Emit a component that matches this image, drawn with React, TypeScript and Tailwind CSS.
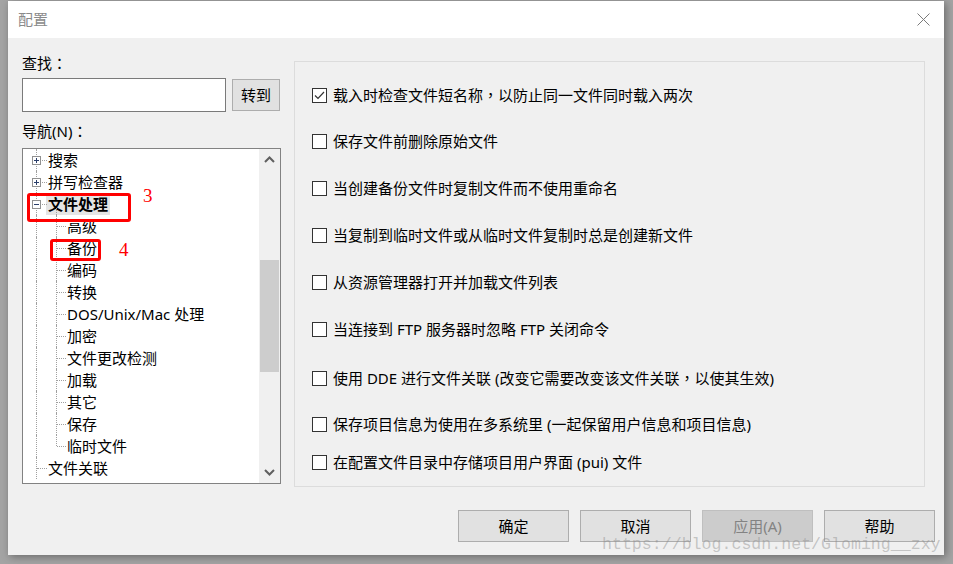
import React from "react";

const font = { fontFamily: '"Noto Sans", "Noto Sans CJK SC", sans-serif' };
const punctFont = { fontFamily: '"Noto Sans CJK TC", sans-serif' };

// full-width punctuation sits centred in the reference, as in the TC cut
function Txt({ s }: { s: string }) {
  const parts = s.split(/([，：])/);
  return (
    <>
      {parts.map((p, i) =>
        p === "，" || p === "：" ? (
          <span key={i} style={punctFont}>
            {p}
          </span>
        ) : (
          <React.Fragment key={i}>{p}</React.Fragment>
        )
      )}
    </>
  );
}

type TreeItem = { label: string; level: 1 | 2; box?: "plus" | "minus"; selected?: boolean; last?: boolean };

const tree: TreeItem[] = [
  { label: "搜索", level: 1, box: "plus" },
  { label: "拼写检查器", level: 1, box: "plus" },
  { label: "文件处理", level: 1, box: "minus", selected: true },
  { label: "高级", level: 2 },
  { label: "备份", level: 2 },
  { label: "编码", level: 2 },
  { label: "转换", level: 2 },
  { label: "DOS/Unix/Mac 处理", level: 2 },
  { label: "加密", level: 2 },
  { label: "文件更改检测", level: 2 },
  { label: "加载", level: 2 },
  { label: "其它", level: 2 },
  { label: "保存", level: 2 },
  { label: "临时文件", level: 2, last: true },
  { label: "文件关联", level: 1 },
];

const options = [
  { label: "载入时检查文件短名称，以防止同一文件同时载入两次", checked: true, mt: "mt-[23px]" },
  { label: "保存文件前删除原始文件", mt: "mt-[26px]" },
  { label: "当创建备份文件时复制文件而不使用重命名", mt: "mt-[27px]" },
  { label: "当复制到临时文件或从临时文件复制时总是创建新文件", mt: "mt-[27px]" },
  { label: "从资源管理器打开并加载文件列表", mt: "mt-[27px]" },
  { label: "当连接到 FTP 服务器时忽略 FTP 关闭命令", mt: "mt-[27px]" },
  { label: "使用 DDE 进行文件关联 (改变它需要改变该文件关联，以使其生效)", mt: "mt-[29px]" },
  { label: "保存项目信息为使用在多系统里 (一起保留用户信息和项目信息)", mt: "mt-[26px]" },
  { label: "在配置文件目录中存储项目用户界面 (pui) 文件", mt: "mt-[18px]" },
];

function ExpandBox({ kind }: { kind: "plus" | "minus" }) {
  return (
    <span className="absolute left-[9px] top-[7px] flex h-[9px] w-[9px] items-center justify-center border border-[#919191] bg-white">
      <svg width="7" height="7" viewBox="0 0 7 7">
        <line x1="1" y1="3.5" x2="6" y2="3.5" stroke="#2b3f6b" strokeWidth="1" />
        {kind === "plus" && <line x1="3.5" y1="1" x2="3.5" y2="6" stroke="#2b3f6b" strokeWidth="1" />}
      </svg>
    </span>
  );
}

function TreeRow({ item }: { item: TreeItem }) {
  return (
    <div className="relative flex h-[22px] items-center">
      <span className="absolute left-[13px] top-0 bottom-0 border-l border-dotted border-[#a0a0a0]" />
      {item.level === 1 ? (
        <>
          <span className="absolute left-[14px] top-[11px] w-[10px] border-t border-dotted border-[#a0a0a0]" />
          {item.box && <ExpandBox kind={item.box} />}
          {item.box === "minus" && (
            <span className="absolute left-[33px] top-[15px] bottom-0 border-l border-dotted border-[#a0a0a0]" />
          )}
        </>
      ) : (
        <>
          <span
            className={
              item.last
                ? "absolute left-[33px] top-0 h-[11px] border-l border-dotted border-[#a0a0a0]"
                : "absolute left-[33px] top-0 bottom-0 border-l border-dotted border-[#a0a0a0]"
            }
          />
          <span className="absolute left-[34px] top-[11px] w-[9px] border-t border-dotted border-[#a0a0a0]" />
        </>
      )}
      <span
        className={
          item.level === 1
            ? item.selected
              ? "ml-[23px] bg-[#e5e5e5] px-[2px] font-bold leading-[22px]"
              : "ml-[25px] leading-[22px]"
            : "ml-[44px] leading-[22px]"
        }
      >
        {item.label}
      </span>
    </div>
  );
}

function Chevron({ up }: { up?: boolean }) {
  return (
    <svg width="11" height="7" viewBox="0 0 11 7">
      <polyline
        points={up ? "1,6 5.5,1.5 10,6" : "1,1 5.5,5.5 10,1"}
        fill="none"
        stroke="#606060"
        strokeWidth="2"
      />
    </svg>
  );
}

function Checkbox({ checked }: { checked?: boolean }) {
  return (
    <span className="flex h-[15px] w-[15px] shrink-0 items-center justify-center border border-[#333] bg-white">
      {checked && (
        <svg width="11" height="9" viewBox="0 0 11 9">
          <polyline points="1,4.5 4,7.5 10,1" fill="none" stroke="#333" strokeWidth="1.2" />
        </svg>
      )}
    </span>
  );
}

export default function App() {
  return (
    <div className="relative h-[564px] w-[953px] overflow-hidden bg-[#a4a4a4] pl-[8px] pt-[1px] text-[15px] text-black" style={font}>
      <div className="flex h-[554px] w-[936px] flex-col bg-[#f0f0f0] shadow-[2px_2px_8px_rgba(0,0,0,0.35)]">
        <div className="flex h-[37px] shrink-0 items-center justify-between bg-white pl-[10px] pr-[14px]">
          <span className="text-[15px] text-[#8a8a8a]">配置</span>
          <svg width="13" height="13" viewBox="0 0 13 13">
            <path d="M0.5 0.5 L12.5 12.5 M12.5 0.5 L0.5 12.5" stroke="#7a7a7a" strokeWidth="1" />
          </svg>
        </div>

        <div className="flex flex-1 flex-col">
          <div className="flex pl-[14px] pt-[15px]">
            <div className="flex w-[259px] flex-col">
              <div className="h-[20px] leading-[20px]">
                <Txt s="查找：" />
              </div>
              <div className="mt-[5px] flex h-[34px]">
                <div className="h-[34px] w-[204px] border border-[#7a7a7a] bg-white" />
                <button className="ml-[6px] mt-[1px] h-[32px] w-[48px] border border-[#adadad] bg-[#e1e1e1] text-[15px]">
                  转到
                </button>
              </div>
              <div className="mt-[9px] h-[20px] leading-[20px]">
                <Txt s="导航(N)：" />
              </div>
              <div className="relative mt-[7px] flex h-[336px] border border-[#828282] bg-white">
                <div className="flex-1 overflow-hidden">
                  {tree.map((item) => (
                    <TreeRow key={item.label} item={item} />
                  ))}
                </div>
                <div className="flex w-[21px] flex-col bg-[#f0f0f0]">
                  <div className="flex h-[21px] items-center justify-center">
                    <Chevron up />
                  </div>
                  <div className="flex-1">
                    <div className="mx-[1px] mt-[90px] h-[112px] bg-[#cdcdcd]" />
                  </div>
                  <div className="flex h-[21px] items-center justify-center">
                    <Chevron />
                  </div>
                </div>

                <div className="absolute left-[4px] top-[44px] h-[29px] w-[104px] rounded-[3px] border-[3px] border-[#f00]" />
                <div className="absolute left-[27px] top-[90px] h-[22px] w-[51px] rounded-[3px] border-[3px] border-[#f00]" />
                <span
                  className="absolute left-[120px] top-[37px] text-[19px] leading-[20px] text-[#f00]"
                  style={{ fontFamily: '"Liberation Serif", serif' }}
                >
                  3
                </span>
                <span
                  className="absolute left-[96px] top-[91px] text-[19px] leading-[20px] text-[#f00]"
                  style={{ fontFamily: '"Liberation Serif", serif' }}
                >
                  4
                </span>
              </div>
            </div>

            <div className="ml-[13px] mt-[8px] flex h-[426px] w-[631px] flex-col border border-[#dcdcdc] pl-[17px]">
              {options.map((o) => (
                <div key={o.label} className={`flex h-[20px] items-center ${o.mt}`}>
                  <Checkbox checked={o.checked} />
                  <span className="ml-[6px] whitespace-nowrap leading-[20px]">
                    <Txt s={o.label} />
                  </span>
                </div>
              ))}
            </div>
          </div>

          <div className="mt-[23px] flex justify-end gap-[11px] pr-[9px]">
            <button className="h-[32px] w-[111px] border border-[#adadad] bg-[#e1e1e1]">确定</button>
            <button className="h-[32px] w-[111px] border border-[#adadad] bg-[#e1e1e1]">取消</button>
            <button className="h-[32px] w-[111px] border border-[#bfbfbf] bg-[#cccccc] text-[#838383]">应用(A)</button>
            <button className="h-[32px] w-[111px] border border-[#adadad] bg-[#e1e1e1]">帮助</button>
          </div>
        </div>
      </div>

      <span
        className="absolute left-[602px] top-[533px] whitespace-nowrap text-[16.6px] leading-[24px] text-[rgba(140,140,140,0.45)]"
        style={{ fontFamily: '"Liberation Mono", monospace' }}
      >
        https://blog.csdn.net/Gloming__zxy
      </span>
    </div>
  );
}
